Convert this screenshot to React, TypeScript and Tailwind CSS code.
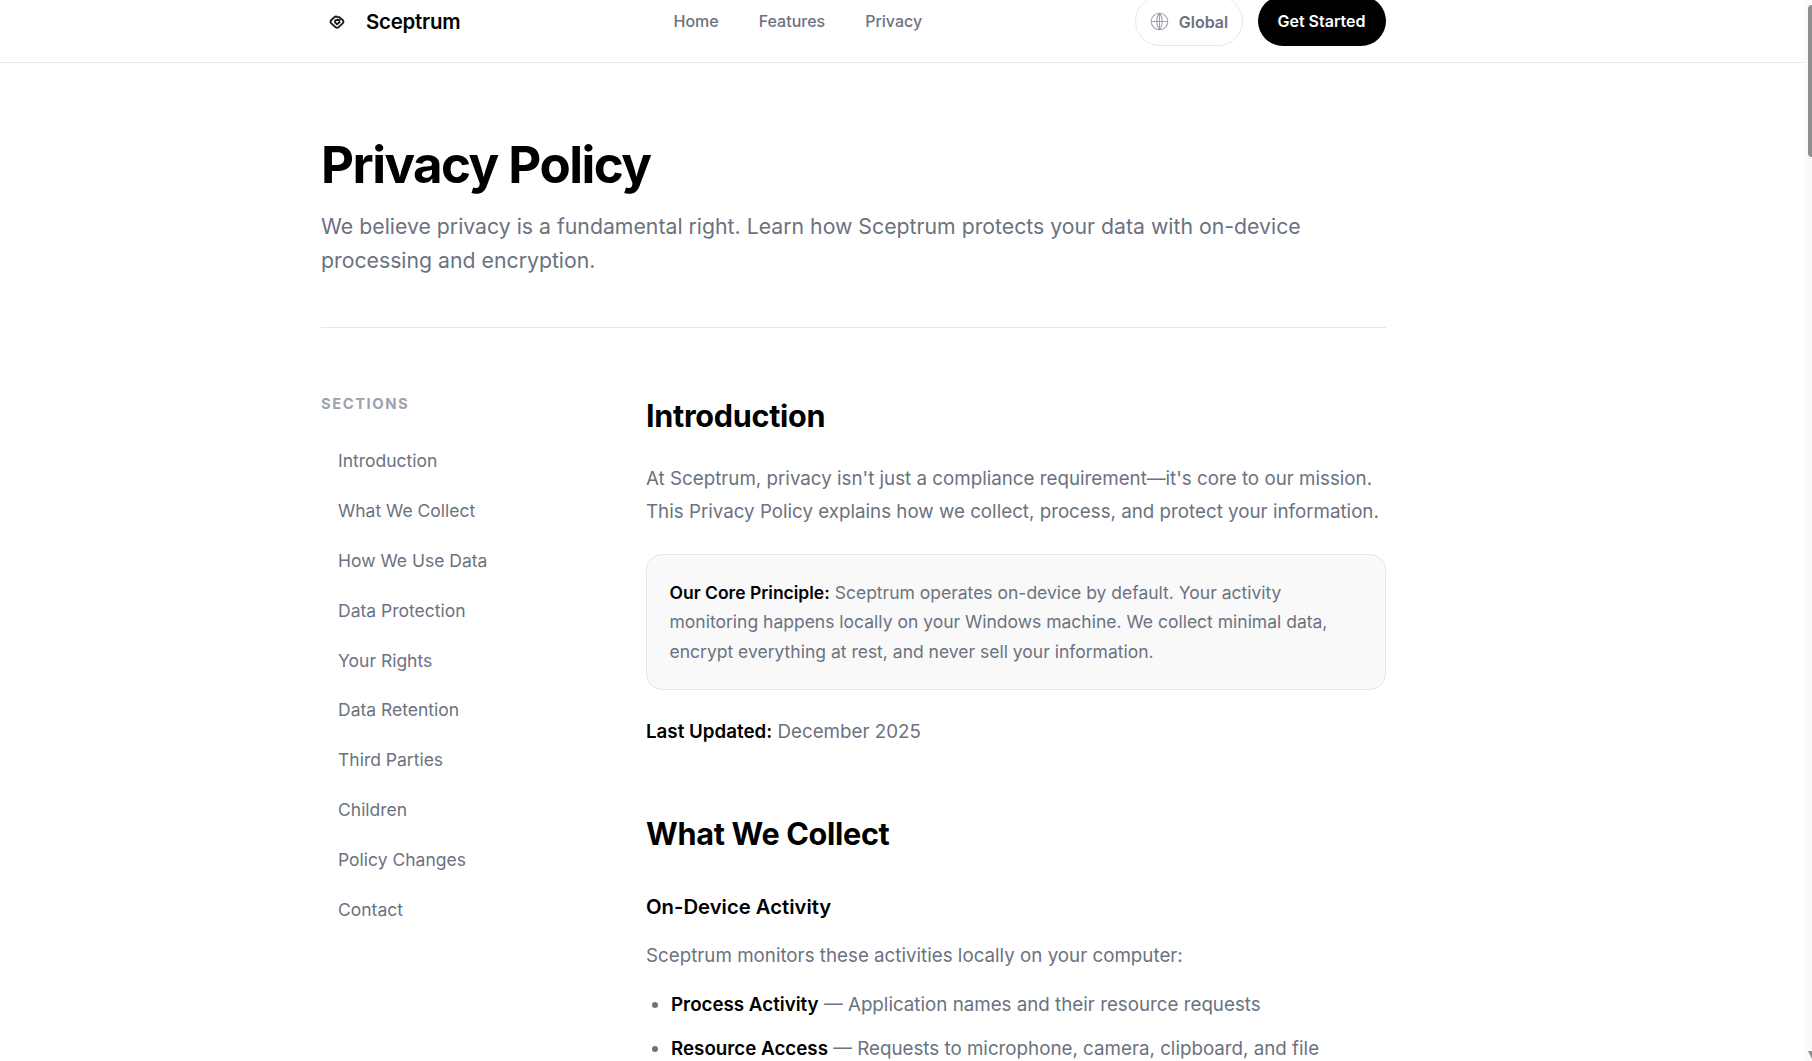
const nav = ["Introduction","What We Collect","How We Use Data","Data Protection","Your Rights","Data Retention","Third Parties","Children","Policy Changes","Contact"];

function Logo() {
  return (
    <svg width="16" height="16" viewBox="0 0 24 24" fill="none" stroke="#1a1a1a" strokeWidth="2.8" strokeLinejoin="round" strokeLinecap="round">
      <path d="M15 4.500 L20.500 9 C22 10.500 22 12.500 20.500 14 L14 20 C12.800 21 11.200 21 10 20 L3.500 14 C2 12.500 2 10.500 3.500 9 L8.500 4.500 C10 3.200 11.500 3.500 13 5" />
      <path d="M16 9 L11.500 9 C9 9 8 11.500 9.500 13 L12 15.500 L16 12" />
    </svg>
  );
}

function Globe() {
  return (
    <svg width="19" height="19" viewBox="0 0 24 24" fill="none" stroke="#9ca3af" strokeWidth="1.3" className="shrink-0">
      <circle cx="12" cy="12" r="10.5" />
      <path d="M1.500 12h21M12 1.500c-2.500 3-3.500 6.500-3.500 10.500s1 7.500 3.500 10.500M12 1.500c2.500 3 3.500 6.500 3.500 10.500s-1 7.500-3.500 10.500M12 1.500v21" />
    </svg>
  );
}

export default function App() {
  return (
    <div className="relative h-[1061px] overflow-hidden bg-white text-[#6b7280] font-['Inter',sans-serif]">
      <header className="-mt-5 h-[83px] border-b border-[#e5e7eb] bg-white pr-2">
        <div className="ml-[321px] flex h-full w-[1065px] items-center">
          <div className="flex w-[352.500px] items-center pl-2 pt-[2px]">
            <Logo />
            <span className="ml-[21px] text-[20.4px] font-semibold tracking-[-0.01em] text-black">Sceptrum</span>
          </div>
          <nav className="flex gap-10 text-[16px] font-medium">
            <span>Home</span>
            <span>Features</span>
            <span>Privacy</span>
          </nav>
          <div className="ml-auto flex items-center gap-[15px]">
            <div className="flex h-[50px] w-[108px] items-center justify-center gap-[10px] rounded-full border border-[#e5e7eb] pt-[1px] text-[16px] font-semibold">
              <Globe />
              <span>Global</span>
            </div>
            <div className="flex h-[50px] w-[128px] items-center justify-center rounded-full bg-black pr-[1px] text-[16px] font-semibold text-white">Get Started</div>
          </div>
        </div>
      </header>

      <main className="ml-[321px] w-[1065px]">
        <div className="border-b border-[#e5e7eb] pb-[50px] pt-[73px]">
          <h1 className="text-[51px] font-bold leading-[58px] tracking-[-0.03em] text-black">Privacy Policy</h1>
          <p className="mt-[16px] w-[1000px] text-[21.25px] leading-[33.5px]">We believe privacy is a fundamental right. Learn how Sceptrum protects your data with on-device processing and encryption.</p>
        </div>

        <div className="mt-[66px] flex">
          <aside className="w-[325px] shrink-0">
            <div className="text-[14.875px] font-bold uppercase leading-[20px] tracking-[0.1em] text-[#9ca3af]">Sections</div>
            <ul className="mt-[22.600px] flex flex-col pl-[17px] text-[17.5px]">
              {nav.map((n) => (
                <li key={n} className="flex h-[49.8px] items-center">{n}</li>
              ))}
            </ul>
          </aside>
          <article className="w-[740px] pt-[2px]">
            <h2 className="text-[30.6px] font-bold leading-[40px] tracking-[-0.01em] text-black">Introduction</h2>
            <p className="mt-[26px] text-[18.76px] leading-[33px]">At Sceptrum, privacy isn't just a compliance requirement—it's core to our mission. This Privacy Policy explains how we collect, process, and protect your information.</p>
            <div className="mt-[26px] rounded-2xl border border-[#e5e7eb] bg-[#f9f9f9] px-[22.500px] pb-[23px] pt-[23px] text-[17.5px] leading-[29.4px]">
              <strong className="font-semibold text-black">Our Core Principle:</strong> Sceptrum operates on-device by default. Your activity monitoring happens locally on your Windows machine. We collect minimal data, encrypt everything at rest, and never sell your information.
            </div>
            <p className="mt-[25px] text-[18.76px] leading-[33px]"><strong className="font-semibold text-black">Last Updated:</strong> December 2025</p>
            <h2 className="mt-[66px] text-[30.6px] font-bold leading-[40px] tracking-[-0.01em] text-black">What We Collect</h2>
            <h3 className="mt-[37px] text-[20.3px] font-semibold leading-[32px] text-black">On-Device Activity</h3>
            <p className="mt-[16px] text-[18.76px] leading-[33px]">Sceptrum monitors these activities locally on your computer:</p>
            <ul className="mt-[16px] list-disc pl-[25px] text-[18.76px] leading-[33px]">
              <li className="mb-[11px]"><strong className="font-semibold text-black">Process Activity</strong> — Application names and their resource requests</li>
              <li><strong className="font-semibold text-black">Resource Access</strong> — Requests to microphone, camera, clipboard, and file system</li>
            </ul>
          </article>
        </div>
      </main>

      <div className="absolute right-0 top-0 h-full w-2 bg-[#fafafa]">
        <div className="absolute left-1 right-0 top-[5px] h-[152px] rounded-bl-[4px] rounded-tl-[4px] bg-[#8f8f8f]" />
        <div className="absolute bottom-[2px] left-1 h-0 w-0 border-x-[4px] border-t-[8px] border-x-transparent border-t-[#8f8f8f]" />
      </div>
    </div>
  );
}
